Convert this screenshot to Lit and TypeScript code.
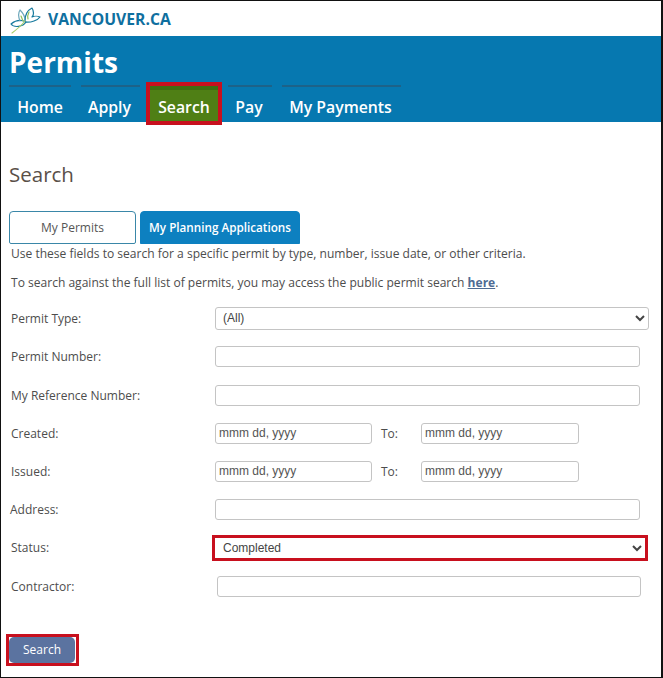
import { LitElement, html, css } from "lit";
import { customElement } from "lit/decorators.js";

@customElement("app-root")
export class AppRoot extends LitElement {
  static styles = css`
    :host { display: block; width: 663px; height: 678px; box-sizing: border-box; border: 1px solid #111; border-right-width: 2px; font-family: "Open Sans", sans-serif; color: #4a4a4a; background: #fff; overflow: hidden; }
    .top { height: 35px; display: flex; align-items: center; gap: 7px; padding-left: 8px; color: #0f6f9f; font-weight: 700; font-size: 15.7px; }
    .top svg { display: block; }
    .band { height: 86px; background: #0678b0; color: #fff; box-sizing: border-box; padding: 8px 0 0 8px; }
    .band h1 { margin: 0; font-size: 28px; line-height: 36px; font-weight: 700; }
    nav { display: flex; gap: 10px; margin-top: 5px; }
    nav a { height: 36px; box-sizing: border-box; border-top: 2px solid #1d6288; display: flex; align-items: center; justify-content: center; font-size: 15.8px; font-weight: 600; padding-top: 6px; }
    nav a.on { background: #4f7f15; border-top: 4px solid #3f6d10; outline: 4px solid #c8101e; height: 35px; margin-top: 1px; padding-top: 2px; }
    .shift { padding-right: 2px; }
    main { padding: 0 0 0 8px; }
    h2 { font-size: 20.5px; line-height: 28px; font-weight: 400; margin: 38px 0 0; color: #5a4f48; }
    .tabs { display: flex; gap: 4px; margin-top: 23px; }
    .tab { width: 127px; height: 33px; box-sizing: border-box; border: 1px solid #3a87a8; border-radius: 4px 4px 2px 2px; display: flex; align-items: center; justify-content: center; font-size: 12px; color: #555; }
    .tab.on { width: 160px; background: #0d80c0; border-color: #0d80c0; color: #fff; font-weight: 600; border-radius: 4px 4px 0 0; font-size: 11.7px; padding-bottom: 2px; }
    p { margin: 1px 0 0 2px; font-size: 12.05px; line-height: 18px; color: #4d4d4d; }
    p.b { margin-top: 11px; }
    p b { color: #4f6b93; text-decoration: underline; font-weight: 700; }
    form { margin-top: 7px; display: flex; flex-direction: column; }
    .row { height: 38px; display: flex; align-items: center; font-size: 12px; color: #4d4d4d; flex: none; }
    .row.tall { height: 39px; }
    .row label { width: 206px; flex: none; padding-left: 2px; box-sizing: border-box; }
    .row label.flush { padding-left: 1px; }
    input, select { box-sizing: border-box; height: 21px; border: 1px solid #c4c4c4; border-radius: 3px; background: #fff; font: 12px "Liberation Sans", sans-serif; color: #444; padding: 0 3px; margin: 0; }
    input::placeholder { color: #555; opacity: 1; }
    .wide { width: 425px; }
    select.type { width: 434px; height: 23px; }
    .date { width: 157px; }
    .date2 { width: 158px; }
    .to { width: 49px; padding-left: 9px; box-sizing: border-box; }
    select.status { width: 430px; height: 20px; border: none; border-radius: 0; outline: 3px solid #c8101e; padding-left: 4px; }
    .contractor { width: 424px; margin-left: 2px; }
    .frame { margin-top: 28px; margin-left: -3px; width: 73px; height: 32px; box-sizing: border-box; border: 3px solid #c8101e; display: block; }
    button { width: 66px; height: 26px; box-sizing: border-box; border: none; border-radius: 5px; background: #5b73a0; color: #fff; font: 12px "Open Sans", sans-serif; display: block; padding: 0 0 2px; }
  `;

  render() {
    return html`
      <div class="top">
        <svg width="32" height="30" viewBox="0 0 32 30" fill="none" stroke-width="1.2" stroke-linecap="round" stroke-linejoin="round">
          <path d="M2 20c5-4 11-4 15-2-3 5-12 6-15 2z" stroke="#177a9e"/>
          <path d="M11 17C9 12 9 9 11 6c3 3 5 6 5 10" stroke="#6ea8bb"/>
          <path d="M16 17c0-6 3-11 7-13 2 3 2 7 0 9 2-1 6-1 8 0-2 3-9 6-15 5" stroke="#177a9e"/>
          <path d="M19 15c-1-3 0-5 1-7M14 17l-2-5" stroke="#8fc15a"/>
          <path d="M3 29c4-3 9-7 13-12" stroke="#a8cf6f"/>
        </svg>
        <span>VANCOUVER.CA</span>
      </div>
      <div class="band">
        <h1>Permits</h1>
        <nav>
          <a style="width:62px">Home</a>
          <a class="shift" style="width:59px">Apply</a>
          <a class="on" style="width:68px">Search</a>
          <a class="shift" style="width:44px">Pay</a>
          <a class="shift" style="width:119px">My Payments</a>
        </nav>
      </div>
      <main>
        <h2>Search</h2>
        <div class="tabs">
          <div class="tab">My Permits</div>
          <div class="tab on">My Planning Applications</div>
        </div>
        <p>Use these fields to search for a specific permit by type, number, issue date, or other criteria.</p>
        <p class="b">To search against the full list of permits, you may access the public permit search <b>here</b>.</p>
        <form>
          <div class="row"><label>Permit Type:</label><select class="type"><option>(All)</option></select></div>
          <div class="row tall"><label>Permit Number:</label><input class="wide" /></div>
          <div class="row"><label>My Reference Number:</label><input class="wide" /></div>
          <div class="row"><label>Created:</label><input class="date" placeholder="mmm dd, yyyy" /><span class="to">To:</span><input class="date2" placeholder="mmm dd, yyyy" /></div>
          <div class="row"><label>Issued:</label><input class="date" placeholder="mmm dd, yyyy" /><span class="to">To:</span><input class="date2" placeholder="mmm dd, yyyy" /></div>
          <div class="row"><label class="flush">Address:</label><input class="wide" /></div>
          <div class="row tall"><label>Status:</label><select class="status"><option>Completed</option></select></div>
          <div class="row tall"><label>Contractor:</label><input class="contractor" /></div>
          <span class="frame"><button type="button">Search</button></span>
        </form>
      </main>
    `;
  }
}
